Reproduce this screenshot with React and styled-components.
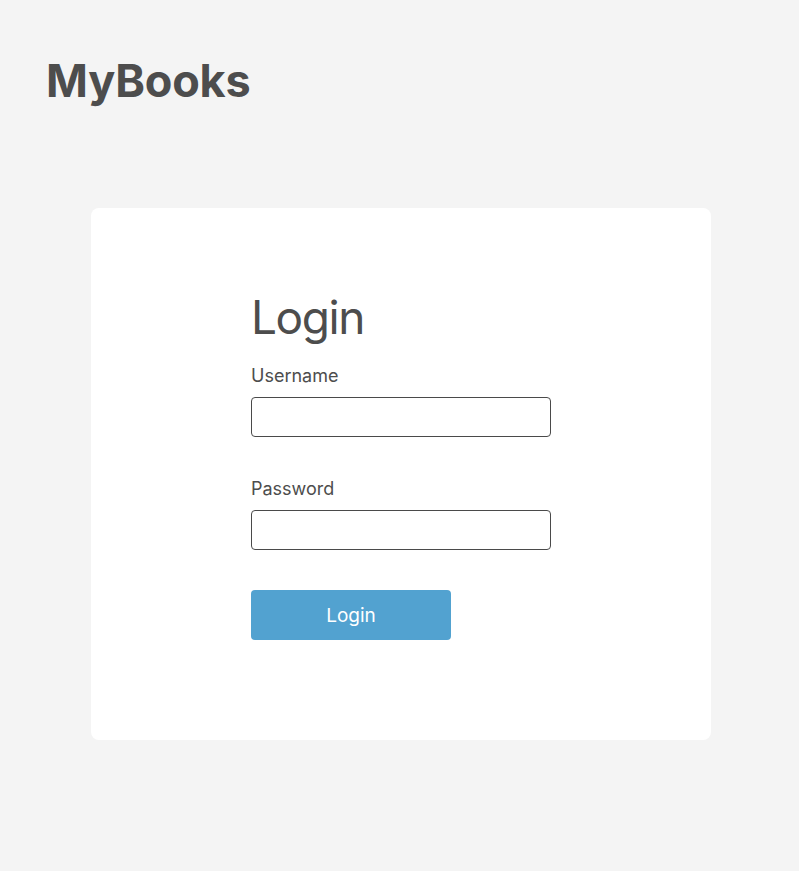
import styled, { createGlobalStyle } from "styled-components"

const GlobalStyle = createGlobalStyle`
  html, body {
    margin: 0;
    padding: 0;
    background-color: #f4f4f4;
    font-family: Inter, "Noto Sans", Arial, sans-serif;
    color: #4d4d4d;
  }
`

export default function App() {
  return (
    <>
      <GlobalStyle />
      <Page>
        <Header>
          <Logo>MyBooks</Logo>
        </Header>
        <Card>
          <Form onSubmit={(e) => e.preventDefault()}>
            <Title>Login</Title>
            <Field>
              <Label htmlFor="username">Username</Label>
              <Input id="username" type="text" />
            </Field>
            <Field>
              <Label htmlFor="password">Password</Label>
              <Input id="password" type="password" />
            </Field>
            <Button type="submit">Login</Button>
          </Form>
        </Card>
      </Page>
    </>
  )
}

const Page = styled.div`
  min-height: 871px;
  padding-top: 54px;
  box-sizing: border-box;
`

const Header = styled.header`
  padding-left: 46px;
`

const Logo = styled.h1`
  margin: 0;
  font-size: 45px;
  font-weight: 700;
  line-height: 53px;
  letter-spacing: -0.2px;
  color: #4d4d4d;
`

const Card = styled.main`
  background-color: #ffffff;
  width: 620px;
  height: 532px;
  margin: 101px 0 0 91px;
  border-radius: 8px;
  box-sizing: border-box;
  padding-top: 81px;
  display: flex;
  justify-content: center;
`

const Form = styled.form`
  width: 300px;
  display: flex;
  flex-direction: column;
`

const Title = styled.h2`
  margin: 0 0 19px;
  font-size: 46px;
  font-weight: 400;
  line-height: 56px;
  letter-spacing: -1.4px;
`

const Field = styled.div`
  display: flex;
  flex-direction: column;
  margin-bottom: 40px;
`

const Label = styled.label`
  font-size: 18px;
  line-height: 24px;
  margin-bottom: 9px;
`

const Input = styled.input`
  height: 40px;
  box-sizing: border-box;
  border: 1px solid #4a4a4a;
  border-radius: 4px;
  padding: 0 10px;
  font-size: 16px;
  font-family: inherit;
  outline: none;
`

const Button = styled.button`
  width: 200px;
  height: 50px;
  border: none;
  border-radius: 4px;
  background-color: #52a2d0;
  color: #ffffff;
  font-family: inherit;
  font-size: 19px;
  cursor: pointer;
`
